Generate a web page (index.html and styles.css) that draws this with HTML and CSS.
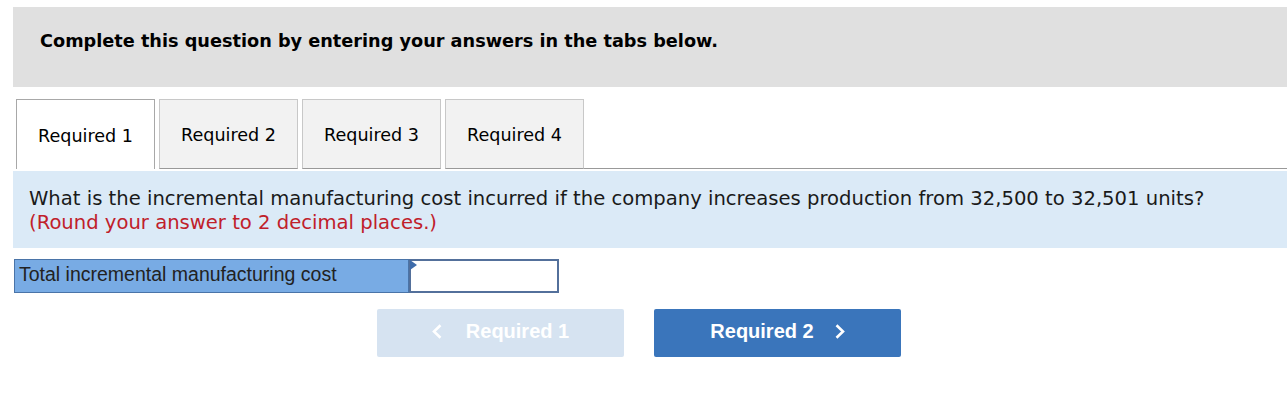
FILE: index.html
```html
<!DOCTYPE html>
<html>
<head>
<meta charset="utf-8">
<link rel="stylesheet" href="styles.css">
</head>
<body>
<div class="page">
  <div class="intro">Complete this question by entering your answers in the tabs below.</div>
  <div class="tabs">
    <div class="tab active">Required 1</div>
    <div class="tab">Required 2</div>
    <div class="tab">Required 3</div>
    <div class="tab">Required 4</div>
    <div class="tab-fill"></div>
  </div>
  <div class="question">
    <div>What is the incremental manufacturing cost incurred if the company increases production from 32,500 to 32,501 units?</div>
    <div class="note">(Round your answer to 2 decimal places.)</div>
  </div>
  <div class="answer-row">
    <div class="answer-label">Total incremental manufacturing cost</div>
    <div class="answer-input"><span class="marker"></span></div>
  </div>
  <div class="nav">
    <div class="btn btn-disabled"><svg class="chev chev-left" width="10" height="15" viewBox="0 0 10 15"><polyline points="8.5,1.2 2,7.5 8.5,13.8" fill="none" stroke="#fff" stroke-width="2.6"/></svg>Required 1</div>
    <div class="btn btn-primary">Required 2<svg class="chev chev-right" width="10" height="15" viewBox="0 0 10 15"><polyline points="1.5,1.2 8,7.5 1.5,13.8" fill="none" stroke="#fff" stroke-width="2.6"/></svg></div>
  </div>
</div>
</body>
</html>
```
FILE: styles.css
```css
* { box-sizing: border-box; }
html, body { margin: 0; padding: 0; background: #fff; }
.page { padding: 7px 0 0 13px; font-family: "DejaVu Sans", Verdana, sans-serif; color: #000; }
.intro {
  background: #e0e0e0;
  height: 80px;
  padding: 24px 0 0 27px;
  font-weight: bold;
  font-size: 17.7px;
}
.tabs { display: flex; margin-top: 12px; height: 70px; padding-left: 3px; }
.tab {
  width: 139px;
  margin-right: 4px;
  background: #f2f2f2;
  border: 1px solid #c8c8c8;
  border-bottom: 1px solid #999;
  font-size: 17.6px;
  display: flex;
  align-items: center;
  justify-content: center;
  padding-top: 2px;
  color: #000;
}
.tab.active { background: #fff; border-color: #a8a8a8; border-bottom: none; }
.tab-fill { flex: 1; border-bottom: 1px solid #999; margin-left: -4px; }
.question {
  background: #dbeaf7;
  margin-top: 2px;
  height: 77px;
  padding: 16px 0 0 16px;
  font-size: 19.6px;
  line-height: 24px;
  color: #1a1a1a;
}
.note { color: #c0202a; }
.answer-row { display: flex; margin-top: 11px; height: 34px; padding-left: 1px; }
.answer-label {
  width: 395px;
  background: #78abe4;
  border: 1px solid #4a74a8;
  font-family: "Liberation Sans", Arial, sans-serif;
  font-size: 19.5px;
  padding: 3px 0 0 4px;
  color: #222;
  white-space: nowrap;
}
.answer-input {
  position: relative;
  width: 150px;
  background: #fff;
  border: 2px solid #53709b;
}
.marker {
  position: absolute; left: -1px; top: -1px;
  width: 0; height: 0;
  border-left: 7px solid #3e6cab;
  border-top: 5px solid transparent;
  border-bottom: 5px solid transparent;
}
.nav { display: flex; margin-top: 16px; padding-left: 364px; gap: 30px; }
.btn {
  width: 247px; height: 48px; border-radius: 2px;
  display: flex; align-items: center; justify-content: center;
  padding-bottom: 3px;
  font-family: "Liberation Sans", Arial, sans-serif;
  font-weight: bold; font-size: 20px; color: #fff;
}
.btn-disabled { background: #d6e3f1; }
.btn-primary { background: #3a75bb; }
.chev { display: block; }
.chev-left { margin-right: 24px; }
.chev-right { margin-left: 21px; }
```
